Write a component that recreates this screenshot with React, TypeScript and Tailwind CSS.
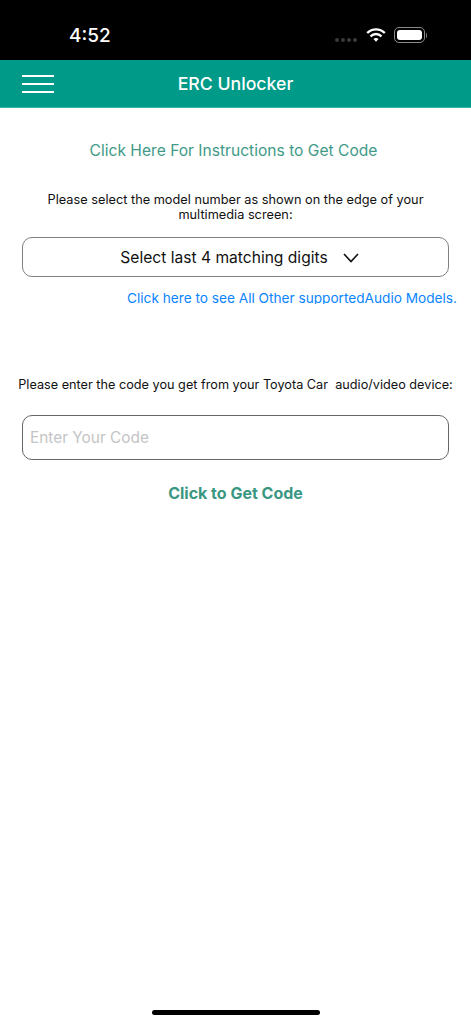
import React, { useState } from 'react';

const font = { fontFamily: 'Inter, "Noto Sans", sans-serif' };

const StatusBar: React.FC = () => (
  <div className="h-[60px] bg-black relative flex items-start justify-between shrink-0">
    <span className="ml-[69px] mt-[24px] text-white text-[19px] leading-[24px] font-medium">4:52</span>
    <div className="mr-[44px] mt-[27px] flex items-start">
      {/* no service dots */}
      <div className="flex gap-[2px] mt-[11px] mr-[9px]">
        <span className="w-[4px] h-[4px] rounded-full bg-[#3a3a3a]" />
        <span className="w-[4px] h-[4px] rounded-full bg-[#3a3a3a]" />
        <span className="w-[4px] h-[4px] rounded-full bg-[#3a3a3a]" />
        <span className="w-[4px] h-[4px] rounded-full bg-[#3a3a3a]" />
      </div>
      <svg width="20" height="14" viewBox="0 0 20 14" className="mr-[8px] mt-[1px]" fill="none" stroke="#fff" strokeWidth="2.300">
        <path d="M1.200 5C3.500 2.700 6.600 1.300 10 1.300S16.500 2.700 18.800 5" />
        <path d="M4.500 8.300C6 6.900 7.900 6 10 6s4 .9 5.500 2.300" />
        <path d="M10 10c-1 0-1.900.4-2.500 1L10 13.700 12.500 11c-.6-.6-1.500-1-2.500-1z" fill="#fff" stroke="none" />
      </svg>
      <div className="flex items-center">
        <div className="w-[31px] h-[16px] rounded-[5px] border border-[#8a8a8a] p-[2px]">
          <div className="w-full h-full rounded-[3px] bg-white" />
        </div>
        <span className="w-[1.500px] h-[5px] ml-[1px] rounded-r-sm bg-[#777]" />
      </div>
    </div>
  </div>
);

const Header: React.FC = () => (
  <div className="h-[48px] bg-[#009a88] border-b border-[#3fb3a5] flex items-center justify-center relative shrink-0">
    <button className="absolute left-[22px] top-[15px] w-[32px] flex flex-col gap-[6px]">
      <span className="block h-[2px] bg-white" />
      <span className="block h-[2px] bg-white" />
      <span className="block h-[2px] bg-white" />
    </button>
    <h1 className="text-white text-[17.700px] font-medium leading-[24px] mt-[1px]">ERC Unlocker</h1>
  </div>
);

export default function App() {
  const [code, setCode] = useState('');

  return (
    <div className="w-[471px] h-[1024px] bg-white flex flex-col relative overflow-hidden" style={font}>
      <StatusBar />
      <Header />

      <div className="flex flex-col">
        <a className="mt-[32px] mr-[4px] text-center text-[15.600px] leading-[22px] text-[#419a88]">
          Click Here For Instructions to Get Code
        </a>

        {/* Model select */}
        <p className="mt-[30px] mx-[30px] text-center text-[12.750px] leading-[15px] text-[#111]">
          Please select the model number as shown on the edge of your multimedia screen:
        </p>
        <button className="mt-[15px] mx-[22px] h-[40px] pt-[2px] rounded-[10px] border border-[#808080] flex items-center justify-center text-[15.600px] text-[#111]">
          <span className="ml-[8px]">Select last 4 matching digits</span>
          <svg width="16" height="10" viewBox="0 0 16 10" className="ml-[15px]" fill="none" stroke="#111" strokeWidth="1.600">
            <path d="M1 1l7 7.500L15 1" />
          </svg>
        </button>
        {/* text is cut at the baseline in the app itself */}
        <div className="mt-[13px] mr-[14px] h-[14px] overflow-hidden text-right text-[13.650px] leading-[17px] text-[#0a84ff]">
          Click here to see All Other supportedAudio Models.
        </div>

        {/* Code input */}
        <p className="mt-[73px] text-center text-[12.700px] leading-[15px] text-[#111]">
          Please enter the code you get from your Toyota Car&nbsp; audio/video device:
        </p>
        <input
          value={code}
          onChange={(e) => setCode(e.target.value)}
          placeholder="Enter Your Code"
          className="mt-[23px] mx-[22px] h-[45px] rounded-[10px] border-[1.500px] border-[#666] px-[7px] text-[15.400px] outline-none placeholder:text-[#c4c4c6]"
        />
        <button className="mt-[21px] text-center text-[16px] leading-[24px] font-bold text-[#3a9782]">
          Click to Get Code
        </button>
      </div>

      <div className="absolute left-[152px] top-[1010px] w-[168px] h-[5px] rounded-full bg-black" />
    </div>
  );
}
